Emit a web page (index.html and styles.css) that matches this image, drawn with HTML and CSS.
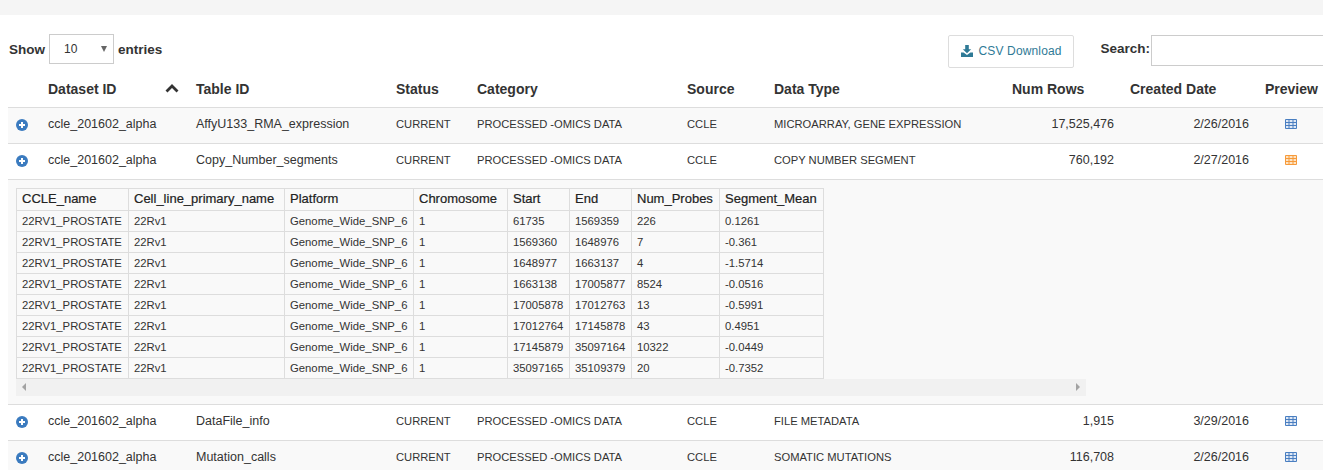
FILE: index.html
```html
<!DOCTYPE html>
<html lang="en">
<head>
<meta charset="utf-8">
<title>Datasets</title>
<link rel="stylesheet" href="styles.css">
</head>
<body>
<div class="topband"></div>
<div class="toolbar">
  <label class="length">Show
    <span class="select-wrap">
      <select class="select"><option>10</option><option>25</option></select>
      <span class="select-arrow"></span>
    </span>
    entries</label>
  <div class="right-tools">
    <button class="csv" type="button">
      <svg class="csv-icon" viewBox="0 0 12 12" width="12" height="12"><path d="M4.2 0h3.6v4.2h2.4L6 8.2 1.8 4.2h2.400zM0 7.600h2.600L6 10l3.400-2.400H12V12H0z" fill="#2f7a96"/></svg>
      CSV Download</button>
    <label class="search">Search:<input class="search-input" type="text"></label>
  </div>
</div>
<table class="main">
  <colgroup>
    <col class="c-a"><col class="c-b"><col class="c-c"><col class="c-d"><col class="c-e"><col class="c-f"><col class="c-g"><col class="c-h"><col class="c-i"><col class="c-j">
  </colgroup>
  <thead>
    <tr>
      <th></th>
      <th class="sort-th">Dataset ID<svg class="sort" viewBox="0 0 14 9" width="14" height="9"><path d="M1.500 7.500 7 2l5.500 5.500" fill="none" stroke="#333" stroke-width="2.800"/></svg></th>
      <th>Table ID</th><th>Status</th><th>Category</th><th>Source</th><th>Data Type</th><th>Num Rows</th><th>Created Date</th><th>Preview</th>
    </tr>
  </thead>
  <tbody>
    <tr class="odd">
      <td class="ctl"><svg class="plus" viewBox="0 0 12 12" width="12" height="12"><circle cx="6" cy="6" r="6" fill="#3b7bbf"/><path d="M6 3v6M3 6h6" stroke="#fff" stroke-width="2"/></svg></td>
      <td>ccle_201602_alpha</td><td>AffyU133_RMA_expression</td><td class="sm">CURRENT</td><td class="sm">PROCESSED -OMICS DATA</td><td class="sm">CCLE</td><td class="sm">MICROARRAY, GENE EXPRESSION</td><td class="num">17,525,476</td><td class="num">2/26/2016</td>
      <td class="pv"><svg viewBox="0 0 12 10" width="12" height="10"><path class="tbl-blue" d="M.5.5h11v9H.5zM.5 3.500h11M.5 6.500h11M4 .5v9M8 .5v9"/></svg></td>
    </tr>
    <tr class="even">
      <td class="ctl"><svg class="plus" viewBox="0 0 12 12" width="12" height="12"><circle cx="6" cy="6" r="6" fill="#3b7bbf"/><path d="M6 3v6M3 6h6" stroke="#fff" stroke-width="2"/></svg></td>
      <td>ccle_201602_alpha</td><td>Copy_Number_segments</td><td class="sm">CURRENT</td><td class="sm">PROCESSED -OMICS DATA</td><td class="sm">CCLE</td><td class="sm">COPY NUMBER SEGMENT</td><td class="num">760,192</td><td class="num">2/27/2016</td>
      <td class="pv"><svg viewBox="0 0 12 10" width="12" height="10"><path class="tbl-orange" d="M.5.5h11v9H.5zM.5 3.500h11M.5 6.500h11M4 .5v9M8 .5v9"/></svg></td>
    </tr>
    <tr class="detail">
      <td colspan="10" class="detail-cell">
        <div class="scroller">
          <table class="inner">
            <colgroup><col class="i-a"><col class="i-b"><col class="i-c"><col class="i-d"><col class="i-e"><col class="i-f"><col class="i-g"><col class="i-h"></colgroup>
            <thead><tr><th>CCLE_name</th><th>Cell_line_primary_name</th><th>Platform</th><th>Chromosome</th><th>Start</th><th>End</th><th>Num_Probes</th><th>Segment_Mean</th></tr></thead>
            <tbody>
              <tr><td>22RV1_PROSTATE</td><td>22Rv1</td><td>Genome_Wide_SNP_6</td><td>1</td><td>61735</td><td>1569359</td><td>226</td><td>0.1261</td></tr>
              <tr><td>22RV1_PROSTATE</td><td>22Rv1</td><td>Genome_Wide_SNP_6</td><td>1</td><td>1569360</td><td>1648976</td><td>7</td><td>-0.361</td></tr>
              <tr><td>22RV1_PROSTATE</td><td>22Rv1</td><td>Genome_Wide_SNP_6</td><td>1</td><td>1648977</td><td>1663137</td><td>4</td><td>-1.5714</td></tr>
              <tr><td>22RV1_PROSTATE</td><td>22Rv1</td><td>Genome_Wide_SNP_6</td><td>1</td><td>1663138</td><td>17005877</td><td>8524</td><td>-0.0516</td></tr>
              <tr><td>22RV1_PROSTATE</td><td>22Rv1</td><td>Genome_Wide_SNP_6</td><td>1</td><td>17005878</td><td>17012763</td><td>13</td><td>-0.5991</td></tr>
              <tr><td>22RV1_PROSTATE</td><td>22Rv1</td><td>Genome_Wide_SNP_6</td><td>1</td><td>17012764</td><td>17145878</td><td>43</td><td>0.4951</td></tr>
              <tr><td>22RV1_PROSTATE</td><td>22Rv1</td><td>Genome_Wide_SNP_6</td><td>1</td><td>17145879</td><td>35097164</td><td>10322</td><td>-0.0449</td></tr>
              <tr><td>22RV1_PROSTATE</td><td>22Rv1</td><td>Genome_Wide_SNP_6</td><td>1</td><td>35097165</td><td>35109379</td><td>20</td><td>-0.7352</td></tr>
            </tbody>
          </table>
          <div class="fake-scrollbar"><span class="tri-left"></span><span class="tri-right"></span></div>
        </div>
      </td>
    </tr>
    <tr class="even">
      <td class="ctl"><svg class="plus" viewBox="0 0 12 12" width="12" height="12"><circle cx="6" cy="6" r="6" fill="#3b7bbf"/><path d="M6 3v6M3 6h6" stroke="#fff" stroke-width="2"/></svg></td>
      <td>ccle_201602_alpha</td><td>DataFile_info</td><td class="sm">CURRENT</td><td class="sm">PROCESSED -OMICS DATA</td><td class="sm">CCLE</td><td class="sm">FILE METADATA</td><td class="num">1,915</td><td class="num">3/29/2016</td>
      <td class="pv"><svg viewBox="0 0 12 10" width="12" height="10"><path class="tbl-blue" d="M.5.5h11v9H.5zM.5 3.500h11M.5 6.500h11M4 .5v9M8 .5v9"/></svg></td>
    </tr>
    <tr class="odd">
      <td class="ctl"><svg class="plus" viewBox="0 0 12 12" width="12" height="12"><circle cx="6" cy="6" r="6" fill="#3b7bbf"/><path d="M6 3v6M3 6h6" stroke="#fff" stroke-width="2"/></svg></td>
      <td>ccle_201602_alpha</td><td>Mutation_calls</td><td class="sm">CURRENT</td><td class="sm">PROCESSED -OMICS DATA</td><td class="sm">CCLE</td><td class="sm">SOMATIC MUTATIONS</td><td class="num">116,708</td><td class="num">2/26/2016</td>
      <td class="pv"><svg viewBox="0 0 12 10" width="12" height="10"><path class="tbl-blue" d="M.5.5h11v9H.5zM.5 3.500h11M.5 6.500h11M4 .5v9M8 .5v9"/></svg></td>
    </tr>
  </tbody>
</table>
</body>
</html>
```
FILE: styles.css
```css
html, body {
  margin: 0;
  height: 470px;
  overflow: hidden;
  background: #fff;
  color: #333;
  font-family: "Liberation Sans", Arial, sans-serif;
  font-size: 12.500px;
}
.topband { height: 15px; background: #f5f5f5; }
.toolbar {
  display: flex;
  justify-content: space-between;
  align-items: flex-start;
  width: 1420px;
  height: 66px;
  padding: 20px 0 0 9px;
  box-sizing: border-box;
}
.length {
  display: flex;
  align-items: center;
  gap: 4px;
  height: 28px;
  font-size: 13.500px;
  font-weight: bold;
}
.select-wrap { position: relative; display: block; }
.select {
  display: block;
  width: 65px;
  height: 30px;
  padding: 0 0 0 14px;
  border: 1px solid #ccc;
  border-radius: 0;
  background: #fff;
  color: #333;
  appearance: none;
  font: 12px "Liberation Sans", Arial, sans-serif;
}
.select-arrow {
  position: absolute;
  left: 52px;
  top: 12px;
  border-left: 3px solid transparent;
  border-right: 3px solid transparent;
  border-top: 6px solid #666;
}
.right-tools { display: flex; align-items: flex-start; margin-right: 0; }
.csv {
  display: flex;
  align-items: center;
  gap: 5px;
  width: 126px;
  height: 33px;
  margin-right: 26px;
  padding: 0 0 2px 12px;
  background: #fff;
  border: 1px solid #ddd;
  border-radius: 2px;
  color: #2f7a96;
  font: 12px "Liberation Sans", Arial, sans-serif;
  letter-spacing: .15px;
}
.csv-icon { flex: none; }
.search {
  display: flex;
  align-items: flex-start;
  font-size: 13.500px;
  font-weight: bold;
  line-height: 27px;
}
.search-input {
  display: block;
  width: 269px;
  height: 31px;
  box-sizing: border-box;
  margin-left: 1px;
  border: 1px solid #ccc;
  padding: 0;
  background: #fff;
}
.main {
  table-layout: fixed;
  border-collapse: collapse;
  width: 1320px;
  margin-left: 8px;
}
.c-a { width: 32px; } .c-b { width: 148px; } .c-c { width: 200px; } .c-d { width: 81px; }
.c-e { width: 210px; } .c-f { width: 87px; } .c-g { width: 238px; } .c-h { width: 118px; }
.c-i { width: 135px; } .c-j { width: 71px; }
.main > thead th {
  height: 26px;
  padding: 0 8px;
  border-bottom: 1px solid #ddd;
  box-sizing: border-box;
  text-align: left;
  vertical-align: top;
  font-size: 14px;
  line-height: 16px;
  white-space: nowrap;
}
.sort-th { position: relative; }
.sort { position: absolute; left: 125px; top: 3px; }
.main > tbody > tr > td {
  height: 36px;
  box-sizing: border-box;
  padding: 0 8px 2px;
  border-bottom: 1px solid #ddd;
  white-space: nowrap;
  font-size: 12.500px;
}
.odd { background: #f9f9f9; }
.even { background: #fff; }
.main > tbody > tr > td.sm { font-size: 11.200px; }
.main > tbody > tr > td.num { text-align: right; }
.main > tbody > tr > td.ctl { padding: 0 0 1px 8px; }
.main > tbody > tr > td.pv { padding: 0 0 2px 28px; }
.plus, .pv svg { display: block; }
.tbl-blue { fill: #dfe8f5; stroke: #4a7fc1; stroke-width: 1; }
.tbl-orange { fill: #fde4c4; stroke: #f79a3a; stroke-width: 1; }
.detail { background: #f9f9f9; }
.main > tbody > tr > td.detail-cell { height: 225px; padding: 8px; vertical-align: top; }
.scroller { width: 1070px; }
.inner {
  table-layout: fixed;
  border-collapse: collapse;
  width: 807px;
}
.i-a { width: 112px; } .i-b { width: 156px; } .i-c { width: 129px; } .i-d { width: 94px; }
.i-e { width: 62px; } .i-f { width: 62px; } .i-g { width: 88px; } .i-h { width: 104px; }
.inner th, .inner td {
  box-sizing: border-box;
  padding: 0 5px;
  border: 1px solid #ddd;
  text-align: left;
  white-space: nowrap;
  overflow: hidden;
}
.inner th { height: 22px; padding-bottom: 2px; font-size: 13px; font-weight: normal; color: #222; -webkit-text-stroke: .2px #222; }
.inner td { height: 21px; font-size: 11.300px; }
.fake-scrollbar {
  display: flex;
  justify-content: space-between;
  align-items: center;
  height: 17px;
  padding: 0 6px;
  background: #f1f1f1;
}
.tri-left { border-top: 4px solid transparent; border-bottom: 4px solid transparent; border-right: 4px solid #a3a3a3; }
.tri-right { border-top: 4px solid transparent; border-bottom: 4px solid transparent; border-left: 4px solid #a3a3a3; }
```
